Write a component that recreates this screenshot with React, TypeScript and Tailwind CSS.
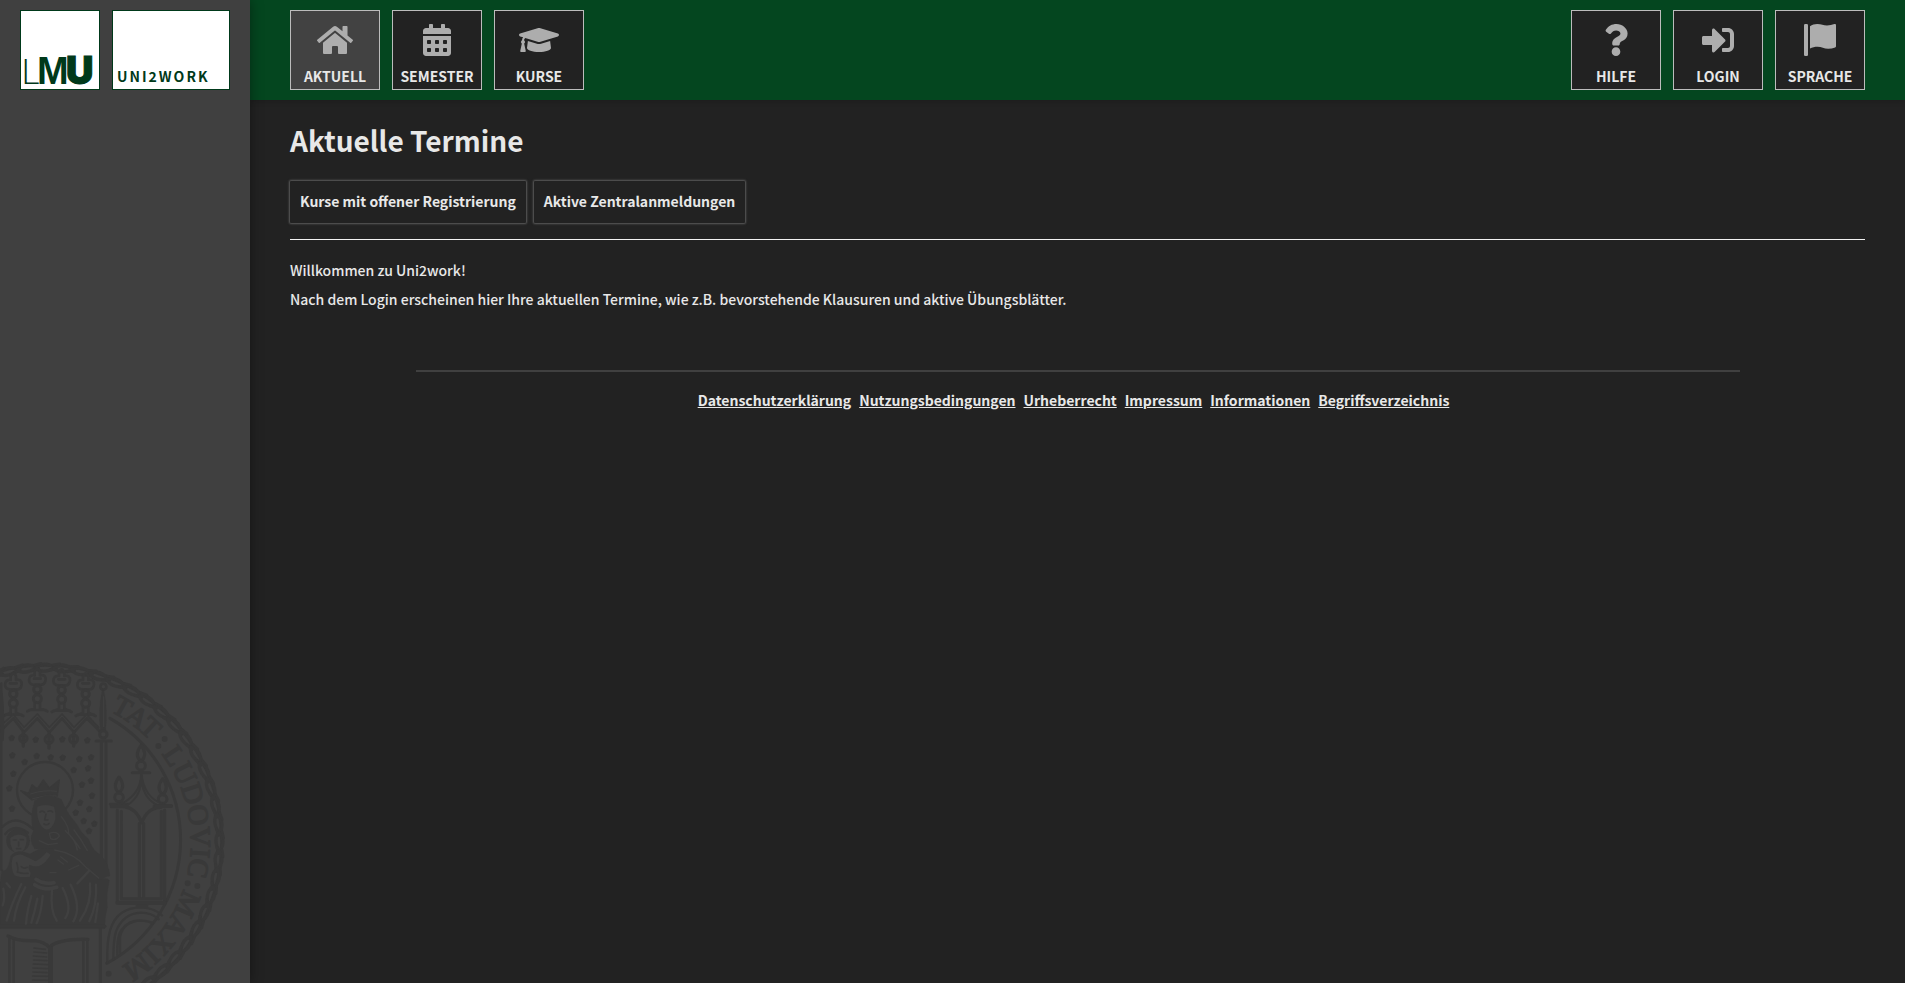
import React from 'react';
import {
  FaHome,
  FaCalendarAlt,
  FaGraduationCap,
  FaQuestion,
  FaSignInAlt,
} from 'react-icons/fa';

function FlagIcon() {
  return (
    <svg viewBox="0 0 32 32" className="h-8 w-8" fill="currentColor" aria-hidden="true">
      <rect x="0" y="0" width="4" height="32" rx="1.2" />
      <path d="M6 2.2C8.200 .8 10.500 0 13.200 0c4.200 0 6.300 1.600 9.800 1.600C25.600 1.600 28.200.8 30.400.1 31.300-.2 32 .4 32 1.300v20.900c0 .6-.3 1-.9 1.200-2.200.9-4.500 1.300-6.900 1.300-4.200 0-6.500-2-10.700-2-2.700 0-5.200.6-7.500 1.700z" />
    </svg>
  );
}

type NavItem = { label: string; icon: React.ReactNode; active?: boolean };

const mainNav: NavItem[] = [
  { label: 'Aktuell', icon: <FaHome className="h-8 w-9" />, active: true },
  { label: 'Semester', icon: <FaCalendarAlt className="h-8 w-7" /> },
  { label: 'Kurse', icon: <FaGraduationCap className="h-8 w-10" /> },
];

const sideNav: NavItem[] = [
  { label: 'Hilfe', icon: <FaQuestion className="h-8 w-6" /> },
  { label: 'Login', icon: <FaSignInAlt className="h-8 w-8" /> },
  { label: 'Sprache', icon: <FlagIcon /> },
];

const footerLinks = [
  'Datenschutzerklärung',
  'Nutzungsbedingungen',
  'Urheberrecht',
  'Impressum',
  'Informationen',
  'Begriffsverzeichnis',
];

function NavList({ items }: { items: NavItem[] }) {
  return (
    <ul className="flex gap-3">
      {items.map((item) => (
        <li key={item.label}>
          <a
            href="#"
            className={`flex h-20 w-[90px] flex-col items-center border border-[#bcbcbc] pt-[13px] ${
              item.active ? 'bg-[#424242]' : 'bg-[#222222]'
            }`}
          >
            <span className="text-[#adadad]">{item.icon}</span>
            <span className="mt-2 text-sm leading-6 font-bold uppercase">{item.label}</span>
          </a>
        </li>
      ))}
    </ul>
  );
}

function LmuLogo() {
  return (
    <svg
      viewBox="0 0 78 78"
      className="h-20 w-20 overflow-visible border border-[#00391a] bg-white"
      fill="#00391a"
      role="img"
      aria-label="LMU"
    >
      <text x="0" y="73" fontSize="36" fontFamily="Lato, sans-serif" fontWeight="300">L</text>
      <text x="16" y="73" fontSize="38" fontFamily="'Liberation Sans', sans-serif" fontWeight="700">M</text>
      <text x="45" y="73" fontSize="38" fontFamily="Inter, sans-serif" fontWeight="900" stroke="#00391a" strokeWidth="1">U</text>
    </svg>
  );
}

function Finial({ x }: { x: number }) {
  return (
    <g transform={`translate(${x} 0)`}>
      <path d="M-8 78q8-16 16 0v12q18-4 17 14-3 16-18 14h-14q-15 2-18-12 0-18 17-16z" fill="none" strokeWidth="8" />
      <path d="M-10 100h20" strokeWidth="8" />
      <circle cx="0" cy="132" r="11" fill="none" strokeWidth="9" />
      <circle cx="0" cy="160" r="12" fill="none" strokeWidth="9" />
      <path d="M-8 174v14l-22 10M8 174v14l22 10M-24 194h48" fill="none" strokeWidth="8" />
    </g>
  );
}

function Spire({ x, y }: { x: number; y: number }) {
  return (
    <g transform={`translate(${x} ${y})`}>
      <path d="M0-74q-22 30 0 48 22-20 0-48z" fill="none" strokeWidth="9" />
      <circle cx="0" cy="-13" r="13" fill="none" strokeWidth="9" />
      <path d="M-26 8h52" strokeWidth="9" />
    </g>
  );
}

const stars = [
  [35, 264], [107, 269], [187, 268], [262, 271], [37, 316], [74, 336], [110, 318], [152, 322],
  [188, 323], [238, 327], [273, 322], [221, 360], [264, 355], [40, 371], [246, 404], [273, 392],
  [28, 415], [276, 437], [240, 458], [36, 476], [268, 477], [227, 488], [251, 513], [283, 521], [267, 543],
];

function Seal() {
  const ropeLinks = Array.from({ length: 31 }, (_, i) => i * 6 - 18);
  return (
    <svg
      viewBox="0 0 750 999"
      className="block w-full text-[#393939]"
      fill="currentColor"
      stroke="currentColor"
      strokeLinecap="round"
      strokeLinejoin="round"
      aria-hidden="true"
    >
      <defs>
        <path id="seal-arc" d="M135 138A438 438 0 0 1 135 1014" />
      </defs>
      <circle cx="135" cy="576" r="530" fill="none" strokeWidth="9" />
      {ropeLinks.map((a) => (
        <g key={a} transform={`rotate(${a} 135 576)`}>
          <path d="M108 52q20-15 42-7 16 7 14 8-26 14-44 9-16-5-12-10z" fill="none" strokeWidth="10" />
          <path d="M103 45l20-5M150 61l20-5" strokeWidth="8" />
        </g>
      ))}
      <path d="M330 205A420 420 0 0 1 320 940" fill="none" strokeWidth="9" />
      <g fontFamily="'Liberation Serif', serif" fontSize="86" strokeWidth="4">
        <text><textPath href="#seal-arc" startOffset="202">TAT</textPath></text>
        <text><textPath href="#seal-arc" startOffset="404">LUDOVIC</textPath></text>
        <text><textPath href="#seal-arc" startOffset="830">MAXIM</textPath></text>
      </g>
      <g stroke="none">
        <circle cx="475" cy="288" r="9" />
        <circle cx="494" cy="267" r="9" />
        <circle cx="563" cy="700" r="9" />
        <circle cx="592" cy="708" r="9" />
        <circle cx="326" cy="971" r="9" />
      </g>

      <Finial x={40} />
      <g transform="translate(0 -14)"><Finial x={112} /></g>
      <g transform="translate(0 -12)"><Finial x={185} /></g>
      <Finial x={257} />
      <path d="M0 245L40 205 72 247 112 205 148 247 186 205 222 247 260 205 300 245" fill="none" strokeWidth="8" />
      <path d="M0 228L40 194M40 194L72 232 112 192 148 232 186 192 222 232 260 194 296 232" fill="none" strokeWidth="5" />
      <path d="M70 246v42M147 250v44M221 246v42" strokeWidth="10" />
      <circle cx="70" cy="265" r="11" fill="none" strokeWidth="9" />
      <circle cx="147" cy="268" r="12" fill="none" strokeWidth="9" />
      <circle cx="221" cy="267" r="12" fill="none" strokeWidth="9" />
      <g strokeWidth="4">
        {stars.map(([x, y]) => (
          <path key={`${x}-${y}`} d={`M${x - 8} ${y - 1}l8-7 8 5-4 10-8 1z`} />
        ))}
      </g>

      <path d="M4 100v560M4 120q8 70 4 150" strokeWidth="7" fill="none" />
      <circle cx="310" cy="110" r="9" fill="none" strokeWidth="8" />
      <path d="M306 122q-12 60-5 118h16q7-58-5-118z" />
      <path d="M311 140v90" stroke="#404040" strokeWidth="3" />
      <circle cx="310" cy="253" r="11" fill="none" strokeWidth="9" />
      <path d="M288 273h46" strokeWidth="9" />
      <path d="M304 280v350M318 280v370M301 830v180" strokeWidth="9" />

      <circle cx="135" cy="420" r="84" fill="none" strokeWidth="7" />
      <path d="M62 422l24 8 10-26 16 12 18-26 18 24 30-24-6 48q-36-8-76 12z" strokeWidth="4" />
      <path d="M92 432q40-14 78-8M98 446q36-12 70-8" fill="none" stroke="#404040" strokeWidth="3" />
      <path d="M104 452q-16 50-4 92-16 26 4 52l54 6q40-2 96 46l42 50q16-20 34-20-4-40-32-66-20-10-32-44-24-20-36-46-30-32-46-74-40-24-80 4z" />
      <path d="M112 470q24-10 50 0 12 40-8 62-14 14-28-2-18-24-14-60z" fill="#404040" stroke="none" />
      <path d="M120 486q8-6 14 1M144 484q8-4 14 2M138 492l-4 18h10M132 522q8 5 15-1" fill="none" strokeWidth="5" />
      <path d="M148 550q24-8 30 8-10 16-26 8zM118 572l26 12 28-4M184 500q24 30 22 52 20 18 26 48M196 542q30 30 44 54M222 540q22 28 40 62" stroke="#404040" strokeWidth="4" fill="none" />

      <path d="M8 530q40-40 90 6M16 552q26-34 68-4" fill="none" strokeWidth="7" />
      <circle cx="54" cy="572" r="35" />
      <path d="M31 564q24-20 48-2 4 26-14 46-14 10-28-10-8-16-6-34z" fill="#404040" stroke="none" />
      <path d="M40 570h9M61 569h9M56 576v12M50 596h12" strokeWidth="5" fill="none" />

      <path d="M6 660q18 12 26-42 20-24 58-6 36-24 74-14 52 8 90 42 30 22 40 50 30-10 34 2-10 40-6 80-8 30-8 64H0V700z" />
      <path d="M38 622q18-14 36-4 22 10 32 16 18-8 34-28l12 8q-14 24-34 34-16 4-30-4-6 10 4 24l-2 12q-34 4-46-4-14-20-6-54z" fill="#404040" stroke="none" />
      <path d="M50 638q6 18 2 28 14 6 32 4M64 650q8 8 18 2" fill="none" strokeWidth="5" />
      <g fill="none" stroke="#404040" strokeWidth="7">
        <path d="M104 704q30 20 66 8M108 688q22 16 54 10" strokeWidth="11" />
        <path d="M164 600q60 10 92 50l40 34M182 620l20 16M174 630l16 12M150 668h18M206 660l30-14" strokeWidth="4" />
        <path d="M64 702q-30 60-44 110M76 712q-28 50-34 100M94 738q-14 50-16 84M112 746q-8 40-18 72M128 738q-4 50-18 82" />
        <path d="M156 722q-6 60 14 90M188 714q30 60 8 90M212 704q34 70 8 110M270 700q6 60-30 112M288 704q4 60-20 110M294 760l-8 56M232 700l36-38" />
        <path d="M10 716q6 30-2 50M20 700l10 12" />
      </g>
      <path d="M0 829h315" strokeWidth="9" />

      <path d="M24 858q28 16 80 14 30 4 44 20 26-26 116-24" fill="none" strokeWidth="10" />
      <path d="M28 860v139M41 872v127M148 892v107M155 892v107M250 872v127M262 868v131" strokeWidth="8" />
      <path d="M102 894l34 4M102 906l38 3M100 918l40 3M101 930l40 2M100 942l42 2M99 954l43 2M99 966l42 2M98 978l44 1M98 990l44 1" strokeWidth="5" />

      <Spire x={357} y={455} />
      <Spire x={423} y={360} />
      <Spire x={488} y={460} />
      <path d="M423 370v26q-4 52-50 74M424 392q8 58 54 76M423 372q0 66-70 94M425 372q6 70 66 92" fill="none" strokeWidth="6" />
      <path d="M334 470h48M468 468h46M372 470q36 4 53 48 18-46 58-46" fill="none" strokeWidth="10" />
      <path d="M352 480v278h142V480M364 484v262h120V484M418 520v224M431 520v224" fill="none" strokeWidth="9" />
      <path d="M352 758h142" strokeWidth="12" />
      <path d="M410 768h32M322 938q-2-60 8-96 20-70 94-70 40 2 62 24M340 928q0-60 8-84 22-54 76-56 30 0 52 20M352 916q-2-60 14-78 30-40 90-20M360 908V860q10-46 64-48 20 0 34 8" fill="none" strokeWidth="7" />
    </svg>
  );
}

function Sidebar() {
  return (
    <aside className="z-10 flex w-[250px] shrink-0 flex-col justify-between bg-[#404040] shadow-[0_0_12px_rgba(0,0,0,0.4)]">
      <a href="#" className="flex gap-3 px-5 pt-[10px]">
        <LmuLogo />
        <span className="flex h-20 w-[118px] items-end border border-[#00391a] bg-white px-1 pb-[1px] text-sm leading-6 font-bold tracking-[2px] text-[#00391a] uppercase">
          Uni2work
        </span>
      </a>
      <Seal />
    </aside>
  );
}

export default function App() {
  return (
    <div className="flex min-h-screen bg-[#222222] font-['Source_Sans_Pro','Noto_Sans_CJK_SC',sans-serif] text-sm text-[#e8e8e8]">
      <Sidebar />
      <div className="min-w-0 flex-1">
        <header className="flex h-[100px] justify-between bg-[#04461f] px-10 pt-[10px] shadow-[0_1px_6px_rgba(0,0,0,0.2)]">
          <nav aria-label="Hauptnavigation">
            <NavList items={mainNav} />
          </nav>
          <nav aria-label="Service">
            <NavList items={sideNav} />
          </nav>
        </header>
        <main className="px-10 pt-5">
          <h1 className="text-[28px] leading-10 font-bold">Aktuelle Termine</h1>
          <div className="mt-[21px] flex gap-2 border-b border-[#f2f2f2] pb-4">
            <a href="#" className="rounded-[1px] px-[10px] pt-[9px] pb-[11px] leading-[22px] font-bold shadow-[0_0_2px_1px_#5c5c5c]">
              Kurse mit offener Registrierung
            </a>
            <a href="#" className="rounded-[1px] px-[10px] pt-[9px] pb-[11px] leading-[22px] font-bold shadow-[0_0_2px_1px_#5c5c5c]">
              Aktive Zentralanmeldungen
            </a>
          </div>
          <div className="mt-[18px] flex flex-col gap-[5px] leading-6 font-medium">
            <p>Willkommen zu Uni2work!</p>
            <p>Nach dem Login erscheinen hier Ihre aktuellen Termine, wie z.B. bevorstehende Klausuren und aktive Übungsblätter.</p>
          </div>
        </main>
        <footer className="mx-auto mt-[59px] w-4/5 border-t-2 border-[#404040] pt-4">
          <ul className="flex flex-wrap justify-center gap-2 pr-2 leading-6">
            {footerLinks.map((label) => (
              <li key={label}>
                <a href="#" className="font-bold underline">{label}</a>
              </li>
            ))}
          </ul>
        </footer>
      </div>
    </div>
  );
}
